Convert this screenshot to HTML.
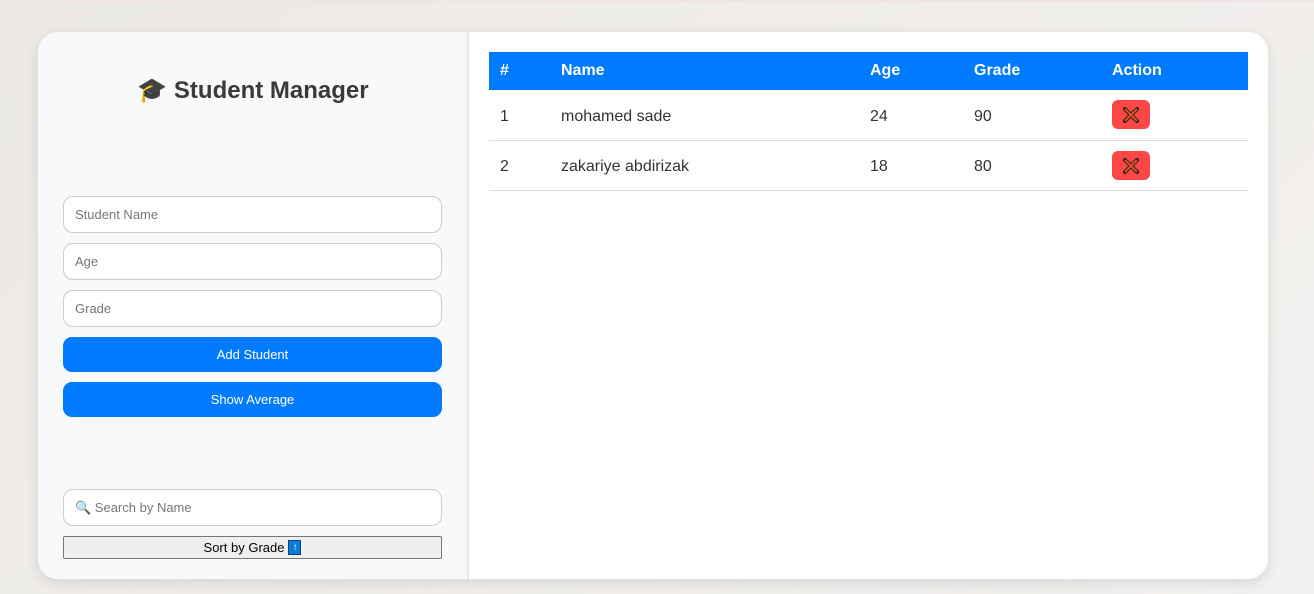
<!DOCTYPE html>
<html><head><style>
*{box-sizing:border-box;margin:0;padding:0}
body{width:1314px;height:594px;background:linear-gradient(135deg,#ece9e5,#f3f1ef);font-family:"Liberation Sans",Arial,sans-serif;position:relative;overflow:hidden}
.topline{position:absolute;left:0;top:0;width:1314px;height:2px;background:#f0e4e6}
.card{position:absolute;left:38px;top:32px;width:1230px;height:547px;background:#fff;border-radius:20px;box-shadow:0 4px 14px rgba(0,0,0,.1);overflow:hidden}
.left{position:absolute;left:0;top:0;width:431px;height:547px;background:#f8f9fb;border-right:2px solid #e6e6e6}
h1{position:absolute;left:0;width:430px;top:44px;text-align:center;font-size:24px;color:#3a3a3a;font-weight:bold}
.inp{position:absolute;left:25px;width:379px;height:37px;border:1px solid #ccc;border-radius:10px;background:#fff;font-size:13px;color:#777;padding-left:11px;line-height:35px}
.btn{position:absolute;left:25px;width:379px;height:35px;background:#007bff;border-radius:9px;color:#fff;font-size:13px;text-align:center;line-height:35px}
.sort{position:absolute;left:25px;top:504px;width:379px;height:23px;background:#efefef;border:1px solid #767676;border-radius:2px;font-size:13px;color:#000;display:flex;align-items:center;justify-content:center;gap:4px}
.arr{display:block;width:13px;height:15px;background:#0a7bd8;color:#fff;font-size:10px;line-height:13px;text-align:center;border:1px solid #05467c}
table{position:absolute;left:451px;top:20px;width:759px;border-collapse:collapse;font-size:16px;color:#333}
th{background:#007bff;color:#fff;text-align:left;height:38px;padding-left:11px;font-weight:bold}
td{height:50px;padding-left:11px;border-bottom:1px solid #ddd;padding-top:4px}
.x{display:inline-block;width:38px;height:29px;background:#ff4747;border-radius:6px;vertical-align:middle;position:relative;top:-2px}
.x svg{position:absolute;left:11px;top:7px}
</style></head><body>
<div class="topline"></div>
<div class="card">
<div class="left">
<h1>🎓 Student Manager</h1>
<div class="inp" style="top:164px">Student Name</div>
<div class="inp" style="top:211px">Age</div>
<div class="inp" style="top:258px">Grade</div>
<div class="btn" style="top:305px">Add Student</div>
<div class="btn" style="top:350px">Show Average</div>
<div class="inp" style="top:457px;padding-left:11px">🔍 Search by Name</div>
<div class="sort"><span>Sort by Grade</span><span class="arr">↑</span></div>
</div>
<table>
<tr><th style="width:61px;padding-top:0">#</th><th style="width:309px">Name</th><th style="width:104px">Age</th><th style="width:138px">Grade</th><th>Action</th></tr>
<tr><td>1</td><td>mohamed sade</td><td>24</td><td>90</td><td><span class="x"><svg width="16" height="16" viewBox="0 0 16 16"><path d="M2 2L14 14M14 2L2 14" stroke="#222" stroke-width="4" stroke-linecap="square"/><path d="M2 2L14 14M14 2L2 14" stroke="#e8501e" stroke-width="2"/></svg></span></td></tr>
<tr><td>2</td><td>zakariye abdirizak</td><td>18</td><td>80</td><td><span class="x"><svg width="16" height="16" viewBox="0 0 16 16"><path d="M2 2L14 14M14 2L2 14" stroke="#222" stroke-width="4" stroke-linecap="square"/><path d="M2 2L14 14M14 2L2 14" stroke="#e8501e" stroke-width="2"/></svg></span></td></tr>
</table>
</div>
</body></html>
